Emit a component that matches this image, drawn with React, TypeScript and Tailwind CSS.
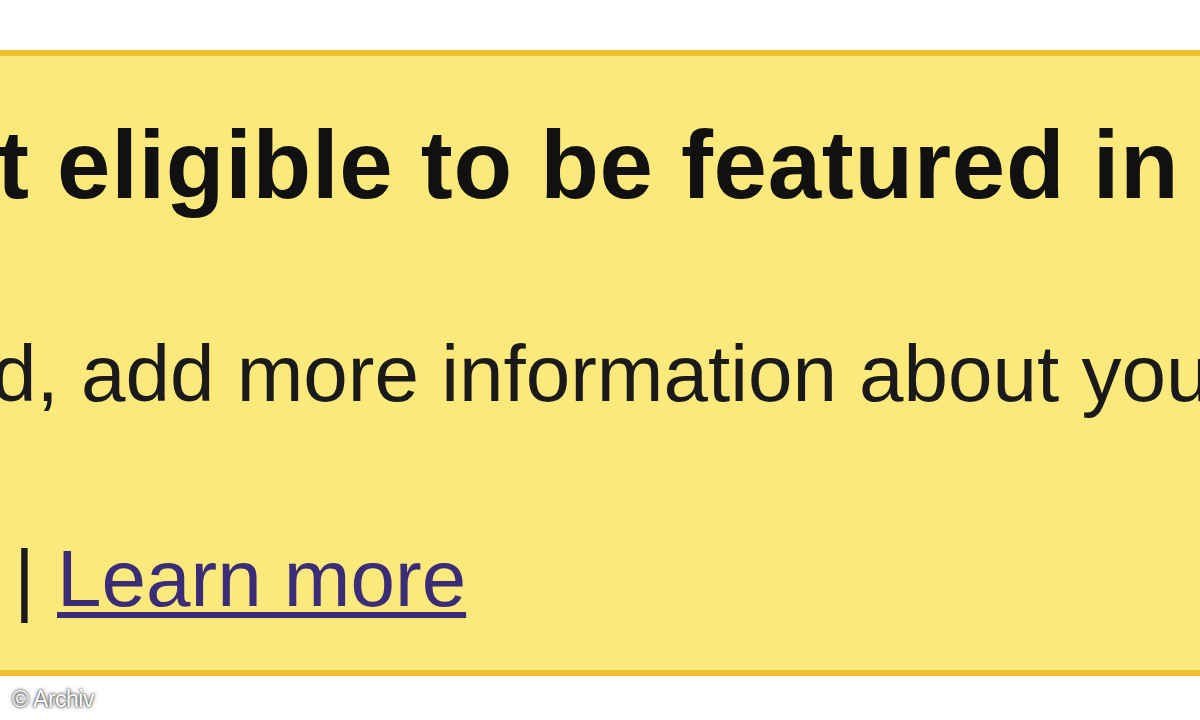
export default function App() {
  return (
    <div className="relative h-[720px] w-[1200px] overflow-hidden bg-white font-['Liberation_Sans',Arial,sans-serif]">
      <div className="h-[50px]" />

      {/* notice box */}
      <div className="h-[626px] overflow-hidden border-y-[6px] border-[#f0c12f] bg-[#fbe97b]">
        <h2 className="-ml-[3px] mt-[61px] whitespace-nowrap text-[96px] font-bold leading-[96px] tracking-[0.7px] text-[#111]">
          t eligible to be featured in
        </h2>
        <p className="-ml-[8px] mt-[121px] whitespace-nowrap text-[80px] leading-[80px] text-[#1a1a1a]">
          d, add more information about you
        </p>
        <p className="mt-[125px] whitespace-nowrap pl-[14px] text-[80px] leading-[80px] text-[#1a1a1a]">
          |{" "}
          <a
            href="#"
            className="text-[#3b2c78] underline decoration-[6px] underline-offset-[6px]"
          >
            Learn more
          </a>
        </p>
      </div>

      <p className="ml-[12px] mt-[10px] text-[23px] leading-[26px] tracking-[-0.5px] text-white [text-shadow:0_0_2px_rgba(0,0,0,0.9),0_0_4px_rgba(0,0,0,0.6)]">
        © Archiv
      </p>
    </div>
  );
}
